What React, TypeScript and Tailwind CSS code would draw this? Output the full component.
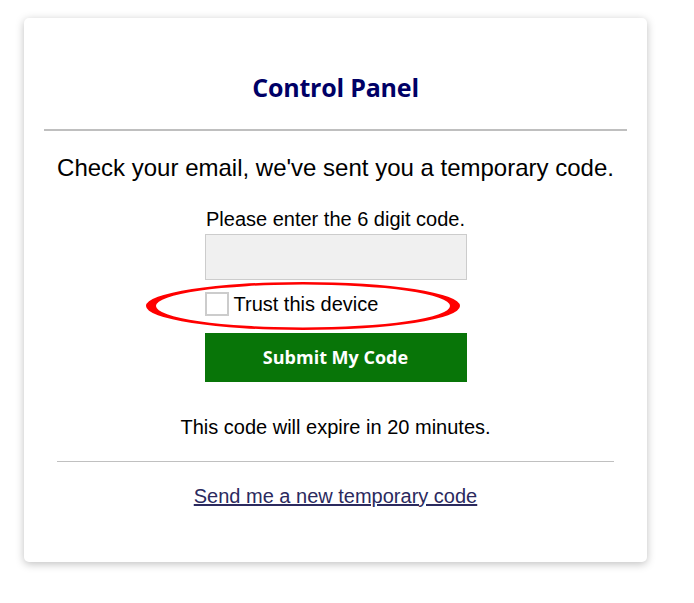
export default function App() {
  return (
    <div className="min-h-screen bg-white pt-[18px] pl-[24px]">
      <div className="w-[623px] rounded-[5px] bg-white pb-[54px] shadow-[0_2px_8px_rgba(0,0,0,0.25)] font-['Liberation_Sans',Arial,sans-serif] text-black">
        <div className="px-[20px] pt-[54px]">
          <h1 className="text-center font-['Open_Sans',sans-serif] text-[25px] leading-[30px] font-bold tracking-[-0.2px] text-[#000066]">
            Control Panel
          </h1>
          <div className="mt-[27px] h-[2px] bg-[#bfbfbf]" />
        </div>

        <p className="mt-[24px] text-center text-[24px] leading-[26px]">
          Check your email, we've sent you a temporary code.
        </p>

        <div className="mx-auto mt-[27px] w-[262px]">
          <p className="text-center text-[20px] leading-[23px] whitespace-nowrap">Please enter the 6 digit code.</p>
          <input
            type="text"
            className="mt-[3px] block h-[46px] w-full border border-[#cccccc] bg-[#f0f0f0] px-2 outline-none"
          />
          <div className="relative mt-[12px] flex items-center gap-[5px]">
            <span className="block h-[24px] w-[24px] border-2 border-[#cccccc] bg-white" />
            <span className="text-[20px] leading-[24px]">Trust this device</span>
            <svg
              className="pointer-events-none absolute left-[-60px] top-[-11px]"
              width="316"
              height="50"
              viewBox="0 0 316 50"
            >
              <path
                fillRule="evenodd"
                fill="#ff0000"
                d="M1 25 A157 24 0 1 0 315 25 A157 24 0 1 0 1 25 Z M11 25 A147 21.5 0 1 1 305 25 A147 21.5 0 1 1 11 25 Z"
              />
            </svg>
          </div>
          <button
            type="button"
            className="mt-[17px] block h-[49px] w-full bg-[#087508] font-['Open_Sans',sans-serif] text-[18px] font-bold text-white"
          >
            Submit My Code
          </button>
        </div>

        <p className="mt-[34px] text-center text-[20px] leading-[23px]">This code will expire in 20 minutes.</p>

        <div className="mx-[33px] mt-[22px] h-px bg-[#c0c0c0]" />

        <p className="mt-[23px] text-center text-[20px] leading-[23px]">
          <a href="#" className="text-[#2b2a5e] underline">
            Send me a new temporary code
          </a>
        </p>
      </div>
    </div>
  )
}
